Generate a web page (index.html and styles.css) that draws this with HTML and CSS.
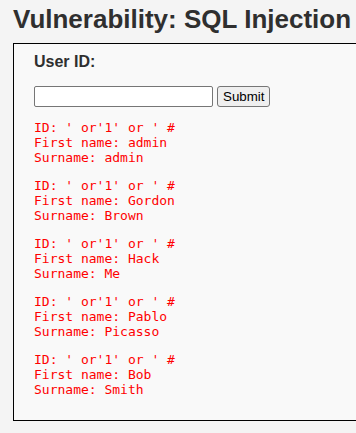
FILE: index.html
```html
<!DOCTYPE html>
<html lang="en">
<head>
  <meta charset="UTF-8" />
  <title>Vulnerability: SQL Injection</title>
  <link rel="stylesheet" href="styles.css">
</head>
<body>
  <div class="body_padded">
    <h1>Vulnerability: SQL Injection</h1>

    <div class="vulnerable_code_area">
      <form action="#" method="GET">
        <p class="label">User ID:</p>
        <p class="row">
          <input type="text" size="15" name="id" class="id-input">
          <input type="submit" name="Submit" value="Submit" class="submit-btn">
        </p>
      </form>
      <pre>ID: ' or'1' or ' #<br>First name: admin<br>Surname: admin</pre>
      <pre>ID: ' or'1' or ' #<br>First name: Gordon<br>Surname: Brown</pre>
      <pre>ID: ' or'1' or ' #<br>First name: Hack<br>Surname: Me</pre>
      <pre>ID: ' or'1' or ' #<br>First name: Pablo<br>Surname: Picasso</pre>
      <pre>ID: ' or'1' or ' #<br>First name: Bob<br>Surname: Smith</pre>
    </div>
  </div>
</body>
</html>
```

FILE: styles.css
```css
html, body {
  margin: 0;
  overflow: hidden;
}

body {
  background-color: #f4f4f4;
  font-family: "Liberation Sans", Arial, sans-serif;
  color: #2f2f2f;
  font-size: 13px;
}

.body_padded {
  padding: 0 0 0 13px;
}

h1 {
  font-size: 26px;
  font-weight: bold;
  margin: 4px 0 8px 0;
  white-space: nowrap;
}

.vulnerable_code_area {
  width: 500px;
  background-color: #f9f9f9;
  border: 1px solid #000;
  padding: 0 20px 10px 20px;
}

.label {
  font-size: 16px;
  font-weight: bold;
  margin: 9px 0 15px 0;
}

.row {
  display: flex;
  align-items: center;
  gap: 4px;
  height: 21px;
  margin: 0 0 13px 0;
}

.id-input {
  box-sizing: border-box;
  width: 179px;
  height: 21px;
  padding: 1px 2px;
  margin: 0;
  border: 1px solid #767676;
  border-radius: 2px;
  background: #fff;
}

.submit-btn {
  box-sizing: border-box;
  font-family: "Liberation Sans", Arial, sans-serif;
  font-size: 13.333px;
  padding: 1px 5px;
  margin: 0;
  height: 21px;
  background: #efefef;
  border: 1px solid #767676;
  border-radius: 3px;
  color: #000;
}

pre {
  font-family: "DejaVu Sans Mono", monospace;
  font-size: 13px;
  color: red;
  margin: 13px 0;
}
```
